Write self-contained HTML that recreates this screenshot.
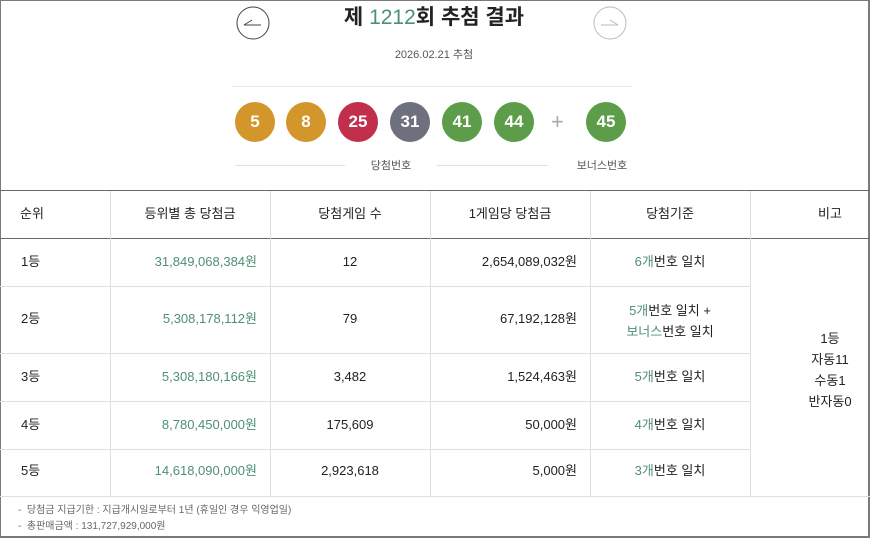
<!DOCTYPE html>
<html><head><meta charset="utf-8"><style>
*{margin:0;padding:0;box-sizing:border-box}
body{width:870px;height:538px;background:#fff;font-family:"Liberation Sans","Noto Sans CJK KR",sans-serif;color:#222;position:relative;overflow:hidden}
.frame{position:absolute;left:0;top:0;width:870px;height:538px;border:1px solid #7a7a7a;border-width:1px 2px 2px 1px}
.a{position:absolute}
.ball{position:absolute;top:102px;width:40px;height:40px;border-radius:50%;color:#fff;font-weight:bold;font-size:17px;line-height:40px;text-align:center}
.y{background:#d3962a}.r{background:#c12f4c}.g{background:#6f707d}.gr{background:#5d9c48}
.hl{position:absolute;height:1px;background:#e0e0e0}
.vl{position:absolute;width:1px;background:#e0e0e0}
.t{position:absolute;font-size:13px;line-height:16px}
.gn{color:#4f8f73}
</style></head><body>
<div class="frame"></div>
<svg class="a" style="left:235px;top:5px" width="36" height="36"><circle cx="18" cy="18" r="16" fill="none" stroke="#444" stroke-width="1"/><path d="M9 20H26M9 20L17 15" stroke="#444" stroke-width="1" fill="none"/></svg>
<svg class="a" style="left:592px;top:5px" width="36" height="36"><circle cx="18" cy="18" r="16" fill="none" stroke="#bbb" stroke-width="1"/><path d="M9 20H26M26 20L18 15" stroke="#bbb" stroke-width="1" fill="none"/></svg>
<div class="a" style="left:290px;top:4px;width:288px;text-align:center;font-size:21px;font-weight:bold;line-height:28px;color:#222">제 <span style="color:#4f8f73;font-weight:normal">1212</span>회 추첨 결과</div>
<div class="a" style="left:330px;top:46px;width:208px;text-align:center;font-size:11px;color:#555">2026.02.21 추첨</div>
<div class="hl" style="left:232px;top:86px;width:400px;background:#e8e8e8"></div>
<div class="ball y" style="left:235px">5</div>
<div class="ball y" style="left:286px">8</div>
<div class="ball r" style="left:338px">25</div>
<div class="ball g" style="left:390px">31</div>
<div class="ball gr" style="left:442px">41</div>
<div class="ball gr" style="left:494px">44</div>
<div class="a" style="left:551px;top:110px;font-size:22px;color:#aaa;line-height:24px">+</div>
<div class="ball gr" style="left:586px">45</div>
<div class="hl" style="left:235px;top:165px;width:110px"></div>
<div class="hl" style="left:437px;top:165px;width:111px"></div>
<div class="a" style="left:351px;top:157px;width:80px;text-align:center;font-size:11px;color:#555">당첨번호</div>
<div class="a" style="left:566px;top:157px;width:72px;text-align:center;font-size:11px;color:#555">보너스번호</div>
<div class="a" style="left:0;top:190px;width:870px;height:1px;background:#666"></div>
<div class="a" style="left:0;top:238px;width:870px;height:1px;background:#666"></div>
<div class="hl" style="left:0;top:286px;width:750px"></div>
<div class="hl" style="left:0;top:353px;width:750px"></div>
<div class="hl" style="left:0;top:401px;width:750px"></div>
<div class="hl" style="left:0;top:449px;width:750px"></div>
<div class="hl" style="left:0;top:496px;width:870px"></div>
<div class="vl" style="left:110px;top:191px;height:305px"></div>
<div class="vl" style="left:270px;top:191px;height:305px"></div>
<div class="vl" style="left:430px;top:191px;height:305px"></div>
<div class="vl" style="left:590px;top:191px;height:305px"></div>
<div class="vl" style="left:750px;top:191px;height:305px"></div>
<div class="t" style="left:20px;top:206px">순위</div>
<div class="t" style="left:110px;top:206px;width:160px;text-align:center">등위별 총 당첨금</div>
<div class="t" style="left:270px;top:206px;width:160px;text-align:center">당첨게임 수</div>
<div class="t" style="left:430px;top:206px;width:160px;text-align:center">1게임당 당첨금</div>
<div class="t" style="left:590px;top:206px;width:160px;text-align:center">당첨기준</div>
<div class="t" style="left:750px;top:206px;width:160px;text-align:center">비고</div>
<div class="t" style="left:21px;top:254px">1등</div>
<div class="t gn" style="left:110px;top:254px;width:147px;text-align:right">31,849,068,384원</div>
<div class="t" style="left:270px;top:254px;width:160px;text-align:center">12</div>
<div class="t" style="left:430px;top:254px;width:147px;text-align:right">2,654,089,032원</div>
<div class="t" style="left:590px;top:254px;width:160px;text-align:center"><span class="gn">6개</span>번호 일치</div>
<div class="t" style="left:21px;top:311px">2등</div>
<div class="t gn" style="left:110px;top:311px;width:147px;text-align:right">5,308,178,112원</div>
<div class="t" style="left:270px;top:311px;width:160px;text-align:center">79</div>
<div class="t" style="left:430px;top:311px;width:147px;text-align:right">67,192,128원</div>
<div class="t" style="left:590px;top:300px;width:160px;text-align:center;line-height:21px"><span class="gn">5개</span>번호 일치 +<br><span class="gn">보너스</span>번호 일치</div>
<div class="t" style="left:21px;top:369px">3등</div>
<div class="t gn" style="left:110px;top:369px;width:147px;text-align:right">5,308,180,166원</div>
<div class="t" style="left:270px;top:369px;width:160px;text-align:center">3,482</div>
<div class="t" style="left:430px;top:369px;width:147px;text-align:right">1,524,463원</div>
<div class="t" style="left:590px;top:369px;width:160px;text-align:center"><span class="gn">5개</span>번호 일치</div>
<div class="t" style="left:21px;top:417px">4등</div>
<div class="t gn" style="left:110px;top:417px;width:147px;text-align:right">8,780,450,000원</div>
<div class="t" style="left:270px;top:417px;width:160px;text-align:center">175,609</div>
<div class="t" style="left:430px;top:417px;width:147px;text-align:right">50,000원</div>
<div class="t" style="left:590px;top:417px;width:160px;text-align:center"><span class="gn">4개</span>번호 일치</div>
<div class="t" style="left:21px;top:463px">5등</div>
<div class="t gn" style="left:110px;top:463px;width:147px;text-align:right">14,618,090,000원</div>
<div class="t" style="left:270px;top:463px;width:160px;text-align:center">2,923,618</div>
<div class="t" style="left:430px;top:463px;width:147px;text-align:right">5,000원</div>
<div class="t" style="left:590px;top:463px;width:160px;text-align:center"><span class="gn">3개</span>번호 일치</div>
<div class="t" style="left:750px;top:328px;width:160px;text-align:center;line-height:21px">1등<br>자동11<br>수동1<br>반자동0</div>
<div class="a" style="left:18px;top:503px;font-size:10px;color:#666;line-height:16px">-&nbsp; 당첨금 지급기한 : 지급개시일로부터 1년 (휴일인 경우 익영업일)<br>-&nbsp; 총판매금액 : 131,727,929,000원</div>
</body></html>
